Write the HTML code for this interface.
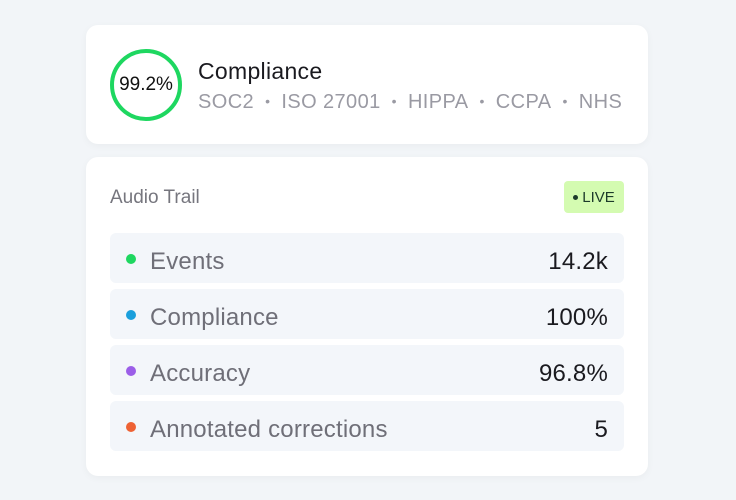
<!DOCTYPE html>
<html><head><style>
*{margin:0;padding:0;box-sizing:border-box}
body{width:736px;height:500px;background:#f2f5f8;font-family:"Liberation Sans",sans-serif;position:relative;overflow:hidden}
.card{position:absolute;left:86px;width:562px;background:#fff;border-radius:12px;box-shadow:0 2px 8px rgba(0,0,0,0.04)}
.c1{top:25px;height:119px}
.c2{top:157px;height:319px}
.ring{position:absolute;left:110px;top:49px;width:72px;height:72px;border:4px solid #1ed760;border-radius:50%;display:flex;align-items:center;justify-content:center;font-size:19px;color:#111}
.t{position:absolute;left:198px;top:58px;font-size:23px;color:#1a1a1f;letter-spacing:0.3px}
.s{position:absolute;left:198px;top:91px;font-size:20px;color:#9a9aa3;white-space:nowrap;letter-spacing:0.4px}
.s b{font-weight:normal;margin:0 11px;font-size:14px;position:relative;top:-2px}
.h{position:absolute;left:110px;top:187px;font-size:19px;color:#76767e}
.live{position:absolute;left:564px;top:181px;width:60px;height:32px;background:#d4fbb1;border-radius:4px;font-size:15px;color:#1c3a2a;display:flex;align-items:center;justify-content:center}
.live i{display:inline-block;width:5px;height:5px;border-radius:50%;background:#1c3a2a;margin-right:4px}
.row{position:absolute;left:110px;width:514px;height:50px;background:#f3f6fa;border-radius:6px;font-size:24px;color:#6f6f78;letter-spacing:0.2px}
.row i{position:absolute;left:16px;top:21px;width:10px;height:10px;border-radius:50%}
.row span{position:absolute;left:40px;top:15px}
.row em{position:absolute;right:16px;top:15px;font-style:normal;color:#1a1a1f}
</style></head><body>
<div class="card c1"></div>
<div class="card c2"></div>
<div class="ring">99.2%</div>
<div class="t">Compliance</div>
<div class="s">SOC2<b>•</b>ISO 27001<b>•</b>HIPPA<b>•</b>CCPA<b>•</b>NHS</div>
<div class="h">Audio Trail</div>
<div class="live"><i></i>LIVE</div>
<div class="row" style="top:233px"><i style="background:#1ed760"></i><span>Events</span><em>14.2k</em></div>
<div class="row" style="top:289px"><i style="background:#1a9fdc"></i><span>Compliance</span><em>100%</em></div>
<div class="row" style="top:345px"><i style="background:#9b5ee8"></i><span>Accuracy</span><em>96.8%</em></div>
<div class="row" style="top:401px"><i style="background:#ee6234"></i><span>Annotated corrections</span><em>5</em></div>
</body></html>
